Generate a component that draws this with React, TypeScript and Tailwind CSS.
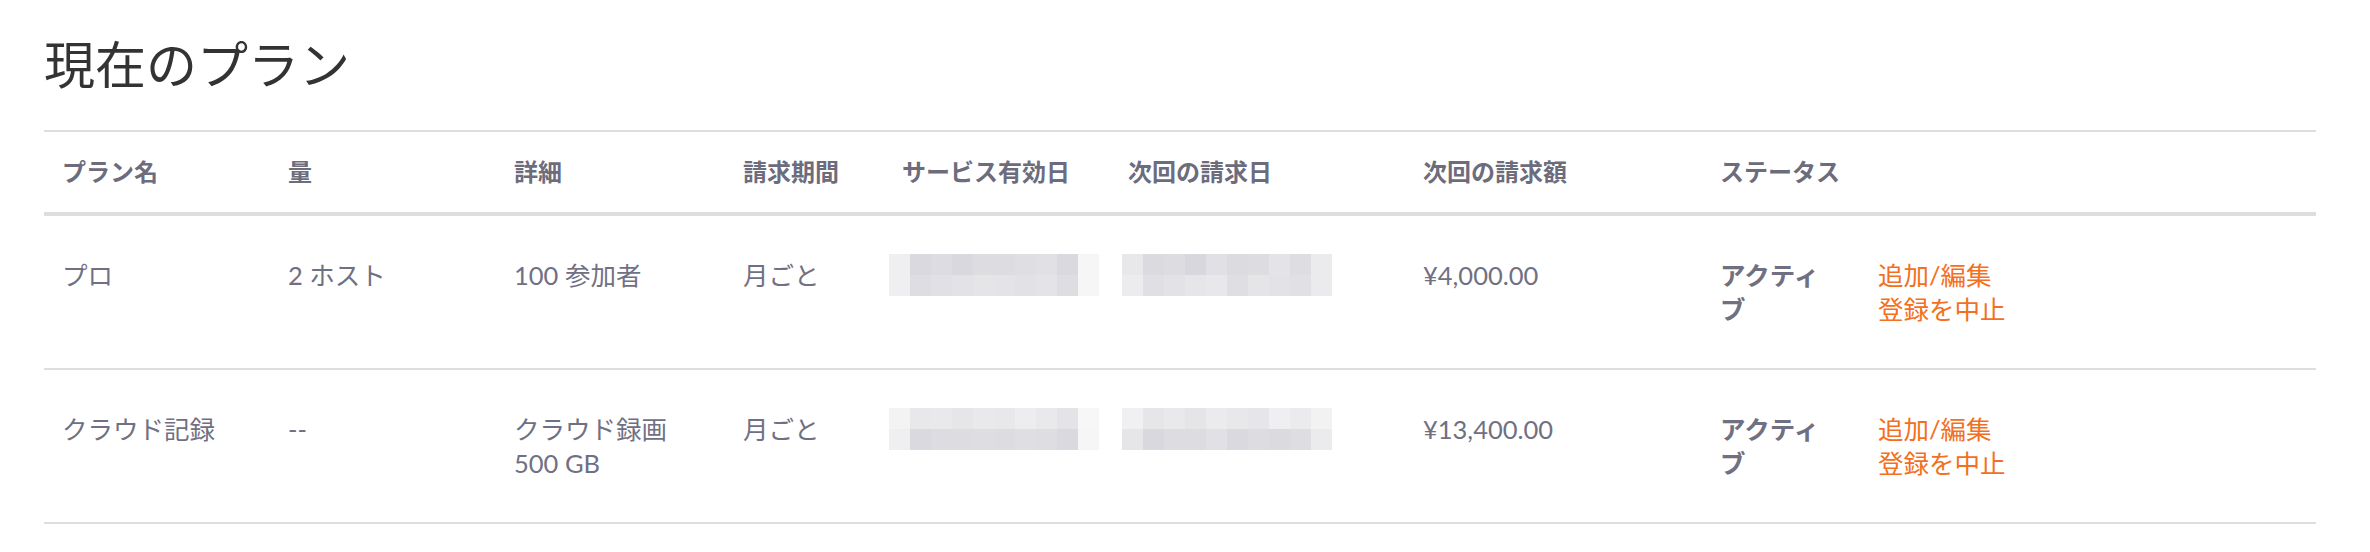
import React from "react";

const A1 = {
  top: ["#efeff1", "#d9d9df", "#dcdce2", "#d8d8de", "#dcdce1", "#dcdce1", "#dedee3", "#e1e1e5", "#d9d9df", "#f6f6f7"],
  bot: ["#efeff1", "#dddde2", "#e1e1e5", "#e3e3e7", "#e5e5e8", "#e4e4e8", "#e2e2e6", "#e4e4e8", "#dddde2", "#f6f6f7"],
};
const B1 = {
  top: ["#e8e8eb", "#dadadf", "#dcdce1", "#d7d7dd", "#e1e1e5", "#dbdbe0", "#dcdce1", "#e4e4e7", "#dddde2", "#ebebee"],
  bot: ["#ececef", "#e0e0e4", "#e3e3e7", "#e6e6e9", "#e8e8eb", "#dfdfe3", "#e5e5e8", "#e3e3e7", "#e1e1e5", "#ebebee"],
};
const A2 = {
  top: ["#f3f3f4", "#e8e8eb", "#e9e9ec", "#e6e6e9", "#e9e9ec", "#e8e8eb", "#ededf0", "#e9e9ec", "#e4e4e8", "#f7f7f8"],
  bot: ["#efeff1", "#d9d9df", "#dcdce1", "#dcdce1", "#dedee2", "#dcdce1", "#dfdfe3", "#dedee2", "#d9d9df", "#f6f6f7"],
};
const B2 = {
  top: ["#f0f0f2", "#e6e6e9", "#e9e9ec", "#e5e5e8", "#ebebee", "#e8e8eb", "#e6e6ea", "#efeff1", "#ebebee", "#f2f2f3"],
  bot: ["#e6e6e9", "#d8d8de", "#dcdce1", "#dcdce1", "#e1e1e5", "#d9d9df", "#dcdce1", "#dadadf", "#dedee2", "#ebebee"],
};

function Pix({ data }: { data: { top: string[]; bot: string[] } }) {
  return (
    <div className="flex flex-col w-[210px] -mt-[4px]">
      <div className="flex">
        {data.top.map((c, i) => (
          <div key={i} className="w-[21px] h-[21px]" style={{ backgroundColor: c }} />
        ))}
      </div>
      <div className="flex">
        {data.bot.map((c, i) => (
          <div key={i} className="w-[21px] h-[21px]" style={{ backgroundColor: c }} />
        ))}
      </div>
    </div>
  );
}

const rowGrid =
  "grid grid-cols-[226px_226px_229px_159px_226px_295px_297px_158px_1fr]";

type Row = {
  name: string;
  qty: string;
  detail: React.ReactNode;
  period: string;
  a: { top: string[]; bot: string[] };
  b: { top: string[]; bot: string[] };
  amount: string;
};

const rows: Row[] = [
  { name: "プロ", qty: "2 ホスト", detail: "100 参加者", period: "月ごと", a: A1, b: B1, amount: "¥4,000.00" },
  {
    name: "クラウド記録",
    qty: "--",
    detail: (
      <>
        クラウド録画
        <br />
        500 GB
      </>
    ),
    period: "月ごと",
    a: A2,
    b: B2,
    amount: "¥13,400.00",
  },
];

export default function App() {
  return (
    <div
      className="w-[2370px] h-[552px] bg-white pl-[44px] pt-[32px]"
      style={{ fontFamily: "Lato, 'Noto Sans CJK JP', sans-serif" }}
    >
      <h1 className="text-[51px] leading-[61px] font-normal text-[#333333]" style={{ fontFamily: "'Noto Sans CJK JP', sans-serif" }}>
        現在のプラン
      </h1>
      <div className="mt-[37px] w-[2272px]">
        <div className={`${rowGrid} border-t-2 border-b-4 border-[#dedede] text-[24px] leading-[34px] font-bold text-[#6c6c7d]`}>
          <div className="pl-[18px] py-[23px]">プラン名</div>
          <div className="pl-[18px] py-[23px]">量</div>
          <div className="pl-[18px] py-[23px]">詳細</div>
          <div className="pl-[18px] py-[23px]">請求期間</div>
          <div className="pl-[18px] py-[23px]">サービス有効日</div>
          <div className="pl-[18px] py-[23px]">次回の請求日</div>
          <div className="pl-[18px] py-[23px]">次回の請求額</div>
          <div className="pl-[18px] py-[23px] whitespace-nowrap">ステータス</div>
          <div className="pl-[18px] py-[23px]"></div>
        </div>
        {rows.map((r, i) => (
          <div
            key={i}
            className={`${rowGrid} border-b-2 border-[#dedede] text-[25.5px] leading-[34px] text-[#707083]`}
          >
            <div className="pl-[18px] py-[42px]">{r.name}</div>
            <div className="pl-[18px] py-[42px]">{r.qty}</div>
            <div className="pl-[18px] py-[42px]">{r.detail}</div>
            <div className="pl-[18px] py-[42px]">{r.period}</div>
            <div className="pl-[5px] py-[42px]">
              <Pix data={r.a} />
            </div>
            <div className="pl-[12px] py-[42px]">
              <Pix data={r.b} />
            </div>
            <div className="pl-[18px] py-[42px]">{r.amount}</div>
            <div className="pl-[18px] py-[42px]">
              <div className="w-[110px] font-bold">アクティブ</div>
            </div>
            <div className="pl-[18px] py-[42px] text-[#f36f22] flex flex-col items-start">
              <span>追加/編集</span>
              <span>登録を中止</span>
            </div>
          </div>
        ))}
      </div>
    </div>
  );
}
